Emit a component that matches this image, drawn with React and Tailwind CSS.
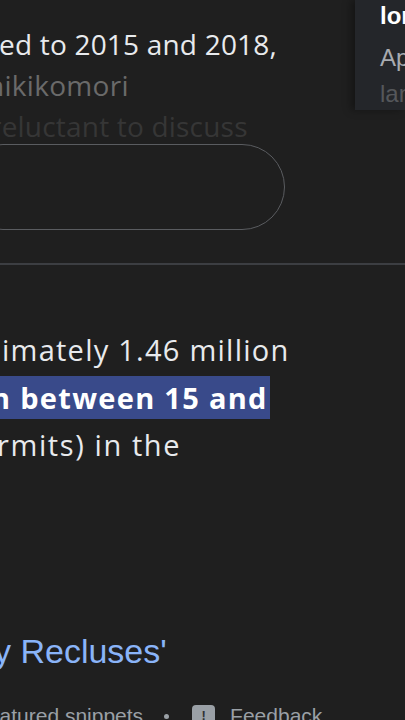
export default function App() {
  const sans = { fontFamily: '"Open Sans", "Noto Sans", sans-serif' };
  const arial = { fontFamily: '"Liberation Sans", Arial, sans-serif' };
  return (
    <div className="relative w-[405px] h-[720px] overflow-hidden bg-[#1f1f1f]">
      {/* top section */}
      <div className="flex h-[263px]">
        <div className="flex-1 flex flex-col overflow-hidden pt-[24px]" style={sans}>
          <div className="text-[28px] leading-[41px] tracking-[0.2px] whitespace-nowrap text-[#e8eaed] ml-[-1px] font-medium">ed to 2015 and 2018,</div>
          <div className="text-[28px] leading-[41px] tracking-[0.3px] whitespace-nowrap text-[#6a6a6a] ml-[-13px] font-medium">hikikomori</div>
          <div className="text-[28px] leading-[41px] tracking-[0.2px] whitespace-nowrap text-[#363636] ml-[-10px] font-medium">reluctant to discuss</div>
          <div className="mt-[-3px] ml-[-40px] w-[325px] h-[86px] rounded-full border-[1.5px] border-[#5a5c60]" />
        </div>
        <div className="w-[50px] h-[110px] bg-[#24262a] shadow-[-4px_0_8px_rgba(0,0,0,0.35)] pl-[25px] pt-[2px] overflow-hidden" style={arial}>
          <div className="text-[24px] leading-[28px] font-bold text-white whitespace-nowrap">long</div>
          <div className="text-[24px] leading-[32px] mt-[12px] text-[#a8abb0] whitespace-nowrap">April</div>
          <div className="text-[24px] leading-[32px] mt-[4px] text-[#55575b] whitespace-nowrap">language</div>
        </div>
      </div>
      <div className="h-[2px] bg-[#3c3e42]" />

      {/* answer text */}
      <div className="pt-[61px] flex flex-col" style={sans}>
        <div className="text-[29px] leading-[48px] tracking-[1.25px] whitespace-nowrap text-[#e8eaed] ml-[2px] font-medium">imately 1.46 million</div>
        <div className="flex">
          <div className="text-[29px] leading-[43px] tracking-[1.3px] my-[2px] whitespace-nowrap text-white font-bold bg-[#394a8a] ml-[-9px] pr-[2px]">n between 15 and</div>
        </div>
        <div className="text-[29px] leading-[48px] tracking-[1.6px] whitespace-nowrap text-[#e8eaed] ml-[-3px] font-medium">rmits) in the</div>
      </div>

      {/* link */}
      <div className="mt-[162px] ml-[-6px] text-[34px] leading-[40px] text-[#8ab4f8] whitespace-nowrap" style={arial}>y Recluses'</div>

      {/* footer */}
      <div className="mt-[33px] flex items-center whitespace-nowrap text-[21px] leading-[24px] text-[#9aa0a6]" style={arial}>
        <span className="ml-[-18px]">featured snippets</span>
        <span className="ml-[21px] w-[5px] h-[5px] rounded-full bg-[#9aa0a6]" />
        <span className="ml-[23px] w-[23px] h-[22px] rounded-[4px] bg-[#9aa0a6] flex items-center justify-center text-[#303134] text-[13px] font-bold">!</span>
        <span className="ml-[15px]">Feedback</span>
      </div>
    </div>
  );
}
